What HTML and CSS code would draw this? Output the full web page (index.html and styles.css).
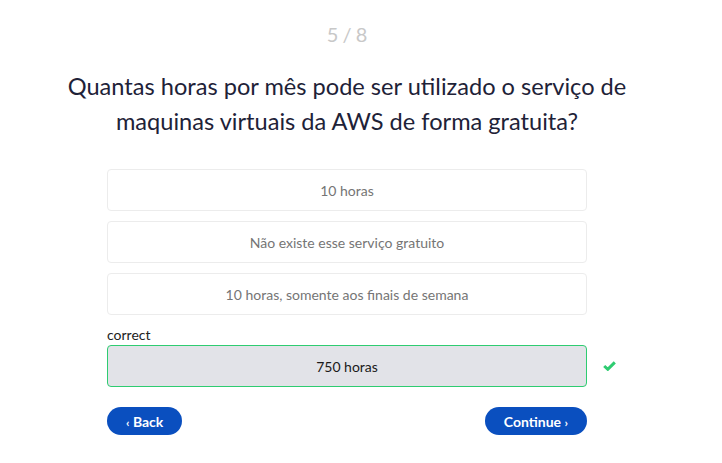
FILE: index.html
```html
<!DOCTYPE html>
<html lang="pt">
<head>
<meta charset="utf-8">
<title>Quiz</title>
<link rel="stylesheet" href="styles.css">
</head>
<body>
<main class="quiz">
  <div class="counter">5 / 8</div>
  <h1 class="question">Quantas horas por mês pode ser utilizado o serviço de maquinas virtuais da AWS de forma gratuita?</h1>
  <div class="options">
    <div class="option">10 horas</div>
    <div class="option">Não existe esse serviço gratuito</div>
    <div class="option">10 horas, somente aos finais de semana</div>
    <div class="answer">
      <div class="answer-label">correct</div>
      <div class="answer-row">
        <div class="option option-correct">750 horas</div>
        <svg class="check" viewBox="0 0 13 10" width="13" height="10" aria-hidden="true">
          <path d="M1.2 5 L4.8 8.3 L11.8 1.4" fill="none" stroke="#2ecc71" stroke-width="3"/>
        </svg>
      </div>
    </div>
  </div>
  <div class="nav">
    <button class="btn"><span class="chev">&lsaquo;</span> Back</button>
    <button class="btn">Continue <span class="chev">&rsaquo;</span></button>
  </div>
</main>
</body>
</html>
```
FILE: styles.css
```css
html, body {
  margin: 0;
  padding: 0;
  background: #fff;
}
body {
  font-family: Lato, "Open Sans", sans-serif;
  padding-right: 28px;
}
.quiz {
  display: flex;
  flex-direction: column;
  align-items: center;
  padding-top: 21px;
}
.counter {
  font-size: 20px;
  line-height: 26px;
  color: #c8c8c8;
  word-spacing: -1px;
}
.question {
  margin: 22px 0 0;
  max-width: 600px;
  font-size: 23.6px;
  font-weight: 400;
  line-height: 35px;
  color: #1e2238;
  text-align: center;
}
.options {
  width: 480px;
  margin-top: 30px;
  display: flex;
  flex-direction: column;
  gap: 10px;
}
.option {
  box-sizing: border-box;
  height: 42px;
  border: 1px solid #ececec;
  border-radius: 4px;
  display: flex;
  align-items: center;
  justify-content: center;
  font-size: 14px;
  color: #757575;
}
.answer {
  margin-top: 1px;
}
.answer-label {
  font-size: 14px;
  line-height: 18px;
  color: #222;
  margin-bottom: 1px;
}
.answer-row {
  position: relative;
}
.option-correct {
  background: #e2e3e8;
  border-color: #2ecc71;
  color: #1a1a1a;
}
.check {
  position: absolute;
  left: calc(100% + 16px);
  top: 16px;
}
.nav {
  width: 480px;
  margin-top: 20px;
  display: flex;
  justify-content: space-between;
}
.btn {
  height: 28px;
  border: 0;
  border-radius: 14px;
  background: #0a4fbf;
  color: #fff;
  font-family: Lato, sans-serif;
  font-weight: 700;
  font-size: 14px;
  padding: 0 19px;
  cursor: pointer;
}
.chev {
  font-size: 12px;
}
```
